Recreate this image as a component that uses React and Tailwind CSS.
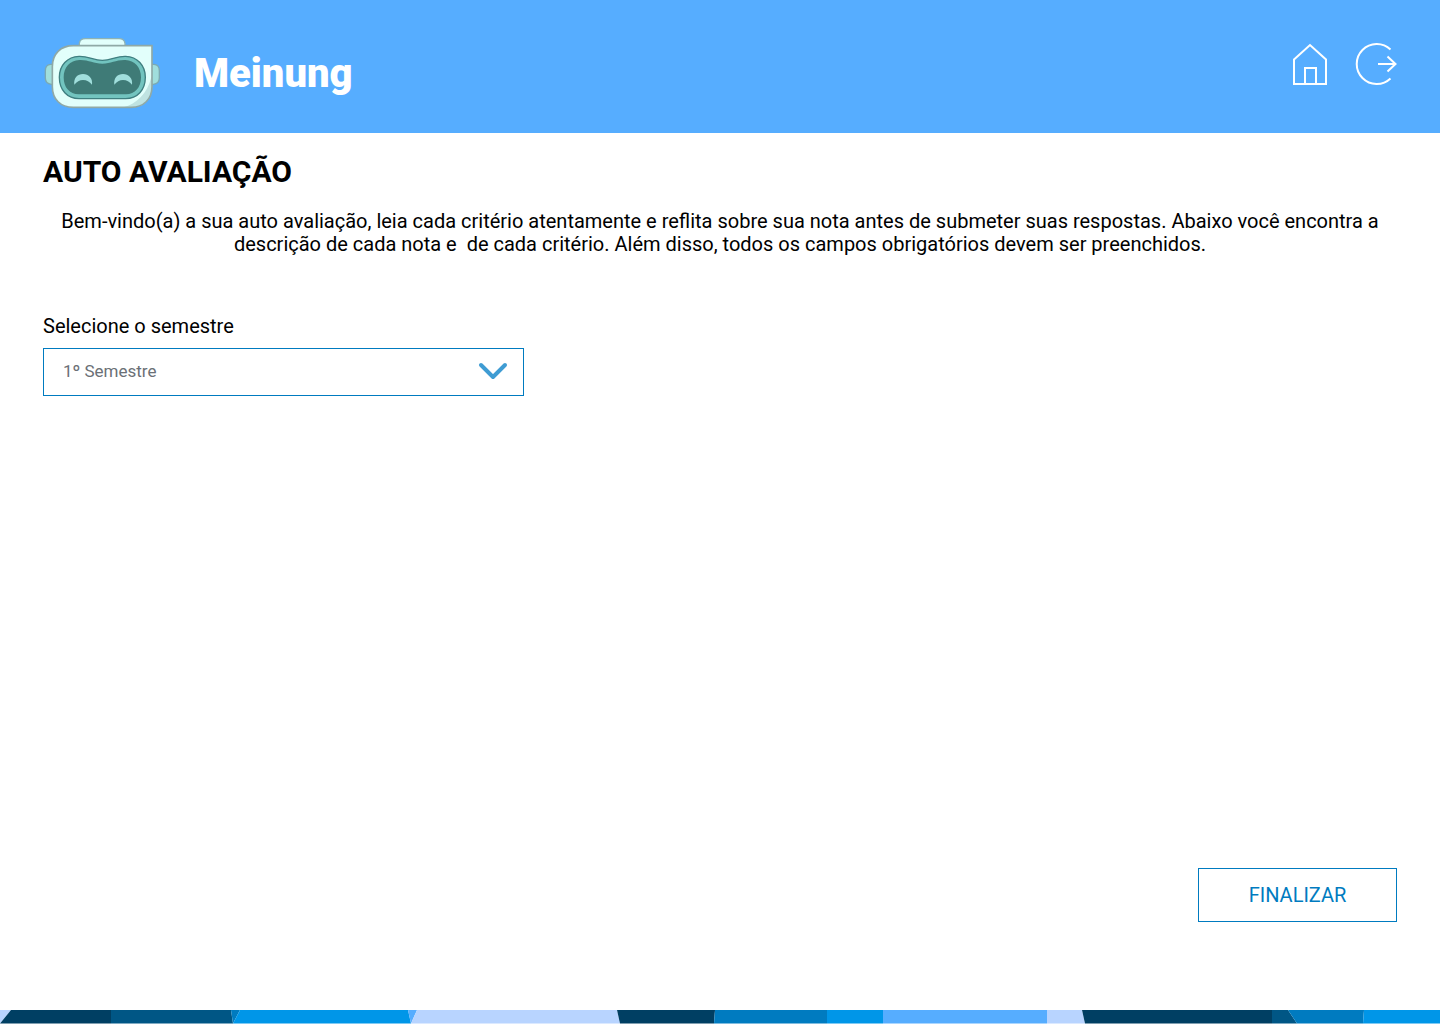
import React from "react";

function RobotLogo() {
  return (
    <svg className="h-[72px] w-[116px] shrink-0" viewBox="24 21 348 216" fill="none" aria-hidden="true">
      <path d="M52 103H44Q28 104 28 122V144Q28 161 46 163H52Z" fill="#a0dedc" stroke="#7aa9b4" strokeWidth="4" />
      <path d="M346 103H354Q370 104 370 122V144Q370 161 352 163H346Z" fill="#a0dedc" stroke="#7aa9b4" strokeWidth="4" />
      <path d="M130 47V40Q132 26 148 26H249Q265 26 267 40V47Z" fill="#e2fffb" stroke="#8fb3b4" strokeWidth="4" />
      <path d="M112 47H348V170C348 208 322 232 286 232H112C74 232 49 208 49 170V110C49 72 74 47 112 47Z" fill="#e2fffb" />
      <path d="M348 142V170C348 208 322 232 286 232H262C302 222 334 190 346 142Z" fill="#bfe3e1" />
      <path d="M112 47H348V170C348 208 322 232 286 232H112C74 232 49 208 49 170V110C49 72 74 47 112 47Z" stroke="#8fa9a6" strokeWidth="5" />
      <path d="M129 79C158 78 172 91 199 91C226 91 240 78 269 79C304 80 328 106 328 142C328 180 304 206 269 206H129C94 206 70 180 70 142C70 106 94 80 129 79Z" fill="#72c4bf" stroke="#3f7f80" strokeWidth="4" />
      <path d="M130 90C158 89 172 101 199 101C226 101 240 89 268 90C296 91 315 112 315 142C315 173 297 193 270 193H128C101 193 83 173 83 142C83 112 102 91 130 90Z" fill="#3f7b77" />
      <path d="M115 164C112 144 125 132 141 132C158 132 171 145 168 164C161 155 152 150 141 150C131 150 122 155 115 164Z" fill="#a0dedc" />
      <path d="M235 164C232 144 245 132 261 132C278 132 291 145 288 164C281 155 272 150 261 150C251 150 242 155 235 164Z" fill="#a0dedc" />
    </svg>
  );
}

function HomeIcon() {
  return (
    <svg className="h-[42px] w-[34px]" viewBox="0 0 34 42" fill="none" stroke="white" strokeWidth="2" aria-hidden="true">
      <path d="M1 16.5L17 2L33 16.5V41H1Z" />
      <path d="M12 41V25H23V41" />
    </svg>
  );
}

function LogoutIcon() {
  return (
    <svg className="h-[42px] w-[42px]" viewBox="0 0 42 42" fill="none" stroke="white" strokeWidth="2" aria-hidden="true">
      <path d="M35.5 6.5A20 20 0 1 0 35.5 35.5" />
      <path d="M23 21H40.5M32.5 13.5L40.5 21L32.5 28.5" />
    </svg>
  );
}

const stripes = [
  ["0,0 11,0 0,13.5", "#b8d4ff"],
  ["11,0 111,0 111,13.5 0,13.5", "#003f63"],
  ["111,0 231,0 233,13.5 111,13.5", "#005685"],
  ["231,0 240,0 233,13.5", "#007bc0"],
  ["240,0 408,0 411,13.5 233,13.5", "#0096e8"],
  ["408,0 417,0 411,13.5", "#56adff"],
  ["417,0 617,0 620,13.5 411,13.5", "#b8d4ff"],
  ["617,0 715,0 714,13.5 620,13.5", "#003f63"],
  ["715,0 827,0 827,13.5 714,13.5", "#007bc0"],
  ["827,0 883,0 883,13.5 827,13.5", "#0096e8"],
  ["883,0 1047,0 1047,13.5 883,13.5", "#56adff"],
  ["1047,0 1082,0 1085,13.5 1047,13.5", "#b8d4ff"],
  ["1082,0 1272,0 1272,13.5 1085,13.5", "#003f63"],
  ["1272,0 1288,0 1297,13.5 1272,13.5", "#005685"],
  ["1288,0 1364,0 1363,13.5 1297,13.5", "#007bc0"],
  ["1364,0 1440,0 1440,13.5 1363,13.5", "#0096e8"],
];

function FooterStripes() {
  return (
    <svg className="block h-[14px] w-full" viewBox="0 0 1440 14" preserveAspectRatio="none" aria-hidden="true">
      {stripes.map(([points, color]) => (
        <polygon key={points} points={points} fill={color} />
      ))}
    </svg>
  );
}

export default function App() {
  return (
    <div className="flex min-h-screen flex-col bg-white font-['Roboto',sans-serif] text-black">
      <header className="flex h-[133px] items-start justify-between bg-[#56adff] pr-[43px] pl-11 text-white">
        <div className="flex items-start gap-[34px] pt-[37px]">
          <RobotLogo />
          <span className="text-[40px] leading-[74px] font-black">Meinung</span>
        </div>
        <nav className="flex gap-7 pt-[43px]">
          <a href="#inicio" aria-label="Início"><HomeIcon /></a>
          <a href="#sair" aria-label="Sair"><LogoutIcon /></a>
        </nav>
      </header>

      <main className="flex flex-1 flex-col px-[43px] pt-[21px]">
        <h1 className="text-[30px] leading-9 font-bold">AUTO AVALIAÇÃO</h1>
        <p className="mt-5 text-center text-[20px] leading-[23px] whitespace-pre-wrap">
          {"Bem-vindo(a) a sua auto avaliação, leia cada critério atentamente e reflita sobre sua nota antes de submeter suas respostas. Abaixo você encontra a descrição de cada nota e  de cada critério. Além disso, todos os campos obrigatórios devem ser preenchidos."}
        </p>

        <label htmlFor="semestre" className="mt-[58px] text-[20px] leading-6">
          Selecione o semestre
        </label>
        <div className="relative mt-[10px] w-full max-w-[481px]">
          <select
            id="semestre"
            defaultValue="1"
            className="block h-12 w-full appearance-none border border-[#007bc0] bg-white pr-14 pl-[19px] text-[17px] text-[#6b7076]"
          >
            <option value="1">1º Semestre</option>
            <option value="2">2º Semestre</option>
          </select>
          <svg
            className="pointer-events-none absolute top-[14px] right-4 h-[18px] w-[30px]"
            viewBox="0 0 30 18"
            fill="none"
            stroke="#3f9cd3"
            strokeWidth="4"
            strokeLinecap="round"
            strokeLinejoin="round"
            aria-hidden="true"
          >
            <path d="M3 3L15 15L27 3" />
          </svg>
        </div>

        <button
          type="button"
          className="mt-auto mb-[88px] h-[54px] w-[199px] self-end border border-[#007bc0] bg-white text-[20px] text-[#007bc0]"
        >
          FINALIZAR
        </button>
      </main>

      <footer>
        <FooterStripes />
      </footer>
    </div>
  );
}
